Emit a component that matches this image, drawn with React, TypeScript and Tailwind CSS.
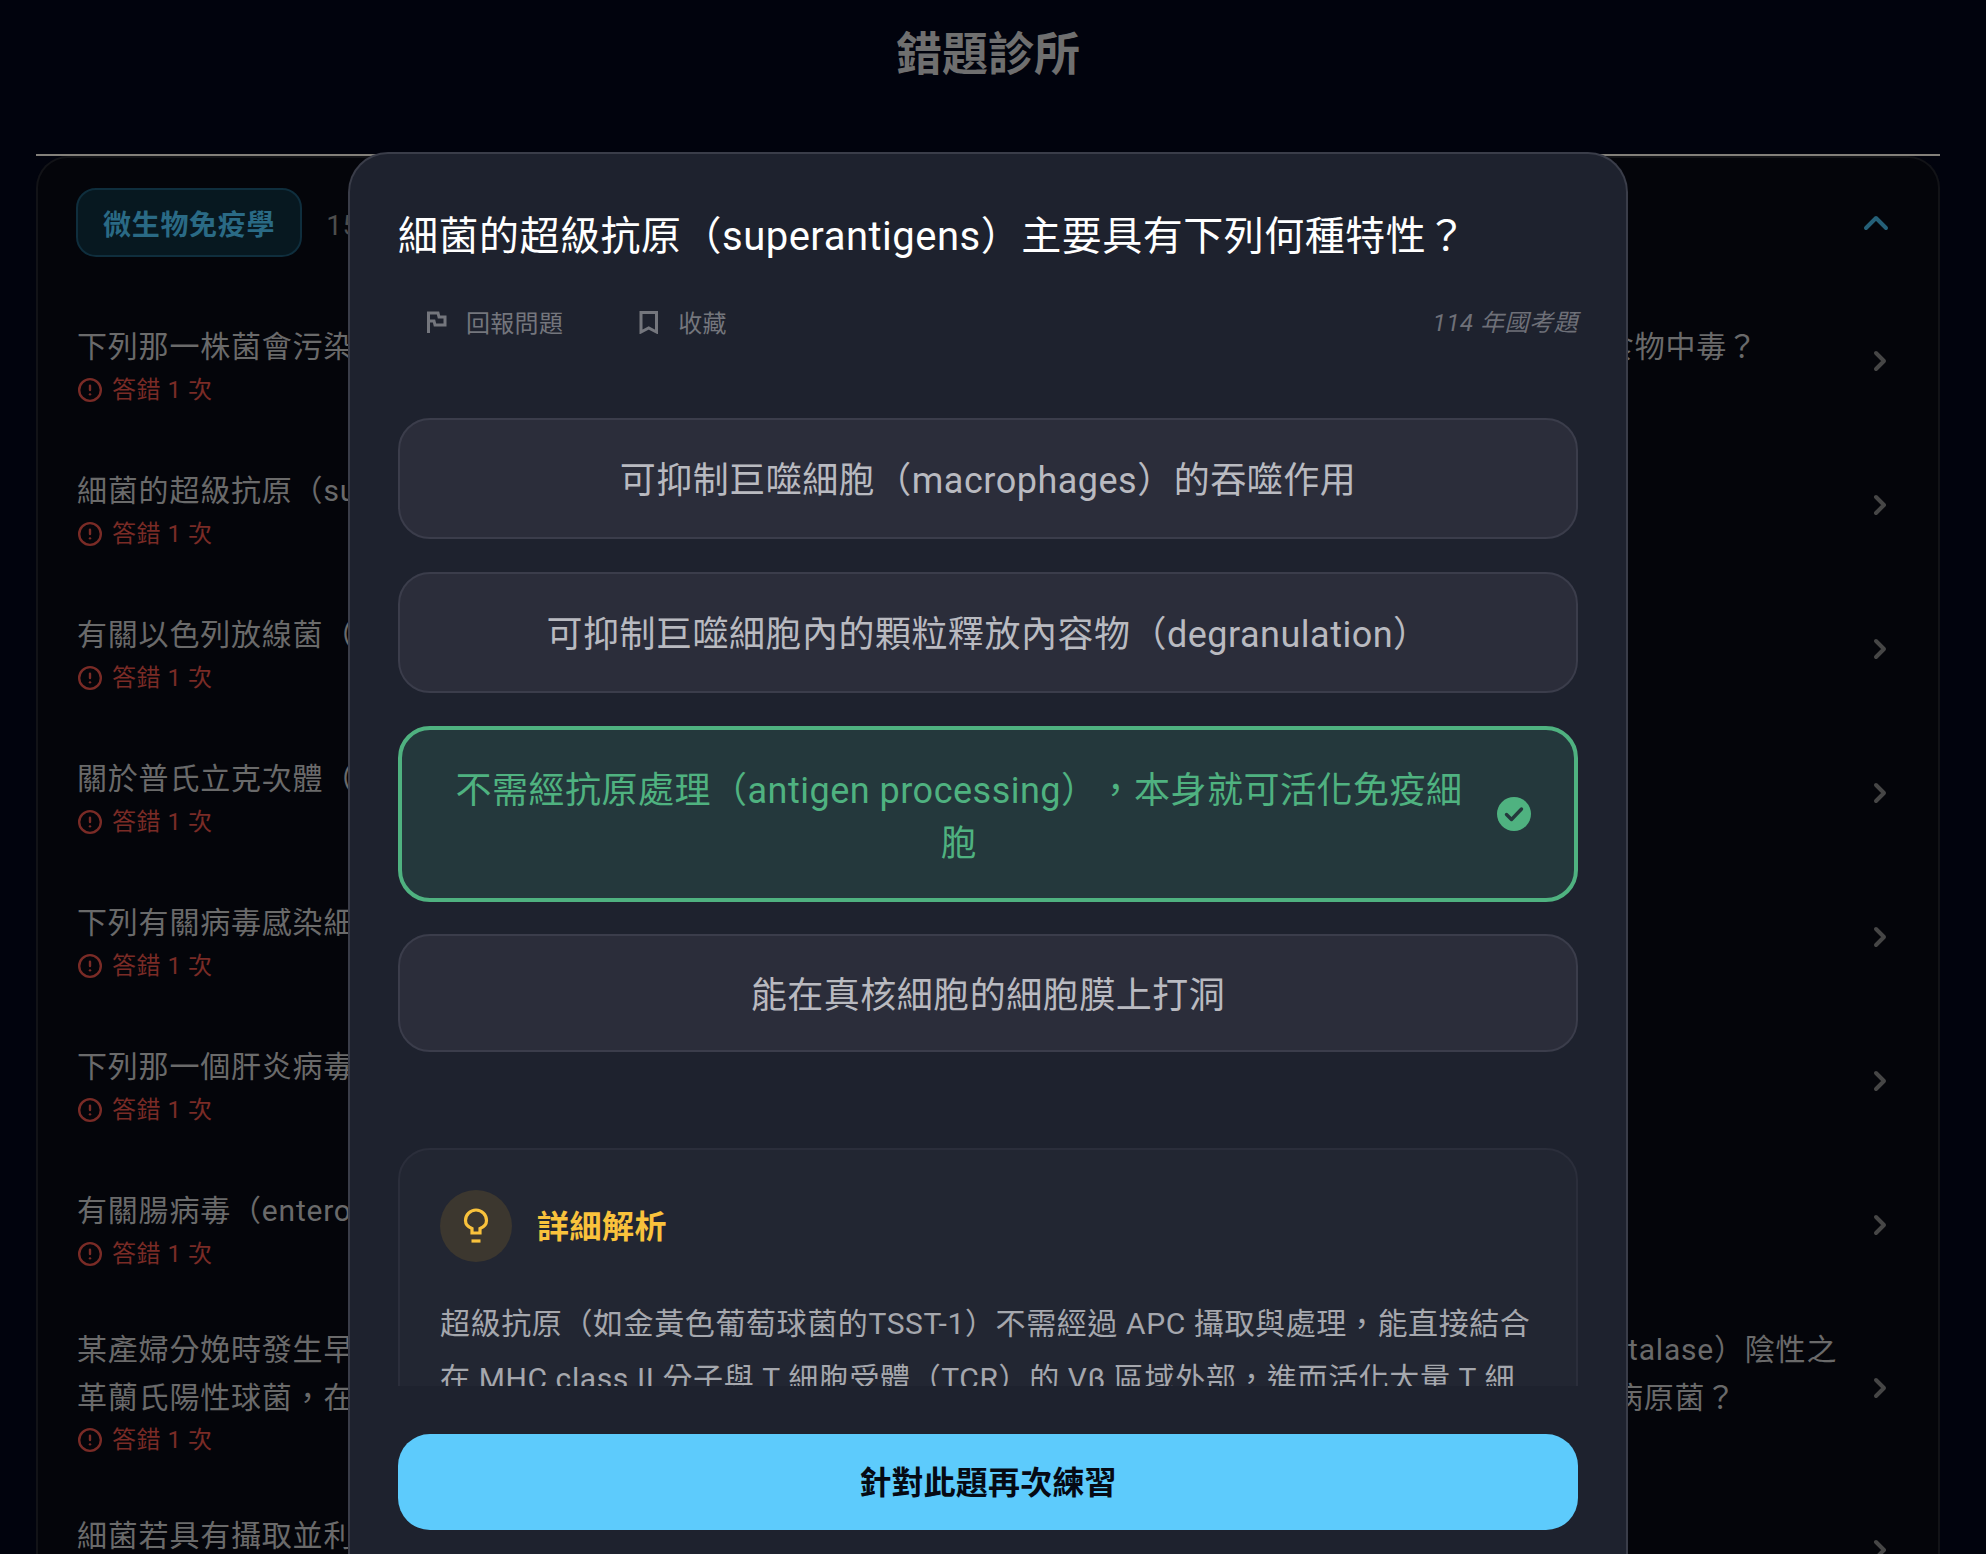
import { ChevronRight, ChevronUp, CircleAlert } from "lucide-react";
import React from "react";

const rows: { lines: string[] }[] = [
  { lines: ["下列那一株菌會污染米飯或其他澱粉類食品，並產生耐熱性嘔吐型腸毒素，經重新加熱後仍會造成嚴重嘔吐1型的食物中毒？"] },
  { lines: ["細菌的超級抗原（superantigens）主要具有下列何種特性？"] },
  { lines: ["有關以色列放線菌（Actinomyces israelii）之敘述，下列何者正確？"] },
  { lines: ["關於普氏立克次體（Rickettsia prowazekii）之敘述，下列何者正確？"] },
  { lines: ["下列有關病毒感染細胞後之敘述，何者正確？"] },
  { lines: ["下列那一個肝炎病毒屬於缺陷型病毒？"] },
  { lines: ["有關腸病毒（enterovirus）之敘述，下列何者錯誤？"] },
  {
    lines: [
      "某產婦分娩時發生早產，新生兒出現敗血症與腦膜炎症狀， 血液培養分離出一種顯微鏡下呈短鏈狀排列、觸酶（catalase）陰性之",
      "革蘭氏陽性球菌，在血液培養基上呈現 β型溶血，且可水解馬尿酸，常見於陰道帶菌，下列何者最可能為此感染之病原菌？",
    ],
  },
  { lines: ["細菌若具有攝取並利用外來 DNA 的能力，此現象稱為下列何者？"] },
];

function QuestionRow({ lines }: { lines: string[] }) {
  return (
    <div className={`flex items-center justify-between ${lines.length > 1 ? "h-[181px]" : "h-[144px]"}`}>
      <div className="mt-2 flex flex-col pl-px">
        {lines.map((line, i) => (
          <p key={line} className={`text-[30px] leading-[48px] tracking-[0.8px] text-[#6a6a6a] ${i === 0 ? "pt-px" : ""}`}>
            {line}
          </p>
        ))}
        <div className="flex h-[37px] items-center gap-[9px] text-[24px] text-[#7a2b26]">
          <CircleAlert size={26} strokeWidth={2.2} />
          <span>答錯 1 次</span>
        </div>
      </div>
      <ChevronRight size={32} strokeWidth={3} className="shrink-0 text-[#464646]" />
    </div>
  );
}

function Option({ children, className }: { children: React.ReactNode; className: string }) {
  return (
    <div className={`rounded-[32px] border-2 border-[#3b3d4b] bg-[#2b2d3a] px-12 text-center text-[36px] leading-[53px] text-[#b9bac0] ${className}`}>
      {children}
    </div>
  );
}

function Modal() {
  return (
    <div className="absolute left-[348px] top-[152px] flex h-[1402px] w-[1280px] flex-col rounded-t-[40px] border-2 border-b-0 border-[#3a3d49] bg-[#1e222e]">
      <div className="h-[1232px] overflow-hidden px-12 pt-[53px]">
        <h2 className="text-[40px] font-normal leading-[60px] text-white">
          細菌的超級抗原（superantigens）主要具有下列何種特性？
        </h2>
        <div className="mt-9 flex h-10 items-center justify-between text-[24px] tracking-[0.3px] text-[#74767d]">
          <div className="flex items-center pt-px">
            <button className="ml-[27px] flex items-center gap-[17px]">
              <svg width="24" height="24" viewBox="0 0 24 24" fill="none" stroke="currentColor" strokeWidth="3" className="-mt-1">
                <path d="M3.5 23V3H13L14 7H20V15H10L9 11H3.5" />
              </svg>
              回報問題
            </button>
            <button className="ml-[74px] flex items-center gap-[17px]">
              <svg width="24" height="24" viewBox="0 0 24 24" fill="none" stroke="currentColor" strokeWidth="3" className="-mt-1">
                <path d="M4 2.5H19.5V22L11.7 18L4 22Z" />
              </svg>
              收藏
            </button>
          </div>
          <span className="italic tracking-[0.5px] text-[#6e7078]">114 年國考題</span>
        </div>

        <div className="mt-[75px] flex flex-col gap-[33px]">
          <Option className="pb-[29px] pt-[35px]">可抑制巨噬細胞（macrophages）的吞噬作用</Option>
          <Option className="pb-[29px] pt-[35px]">可抑制巨噬細胞內的顆粒釋放內容物（degranulation）</Option>
          <div className="flex items-center rounded-[32px] border-4 border-[#4fb280] bg-[#24383c] pb-[27px] pl-[47px] pr-[43px] pt-[35px] text-[36px] leading-[53px] text-[#4fb280]">
            <span className="flex-1 text-center">不需經抗原處理（antigen processing），本身就可活化免疫細胞</span>
            <svg width="34" height="34" viewBox="0 0 34 34" className="-mt-2 ml-7 shrink-0">
              <circle cx="17" cy="17" r="17" fill="#4fb280" />
              <path d="M9.5 17.5L14.5 22.5L24.5 12" fill="none" stroke="#24383c" strokeWidth="3.4" strokeLinecap="round" strokeLinejoin="round" />
            </svg>
          </div>
          <Option className="-mt-px pb-[27px] pt-[34px]">能在真核細胞的細胞膜上打洞</Option>
        </div>

        <div className="mt-[96px] rounded-t-[32px] border-2 border-[#2b2e3b] bg-[#222632] px-10 pb-10 pt-10">
          <div className="flex items-center gap-[25px]">
            <div className="flex h-[72px] w-[72px] items-center justify-center rounded-full bg-[#3c372f]">
              <svg width="36" height="36" viewBox="0 0 36 36" fill="none" stroke="#f9c23c" strokeWidth="3.2">
                <path d="M14 25V20.5C10 19 7.5 16.5 7.5 12.5A10.5 10.5 0 0 1 28.5 12.5C28.5 16.5 26 19 22 20.5V25Z" />
                <path d="M13.5 33H22.5" />
              </svg>
            </div>
            <h3 className="pt-0.5 text-[32px] font-bold text-[#f9c23c]">詳細解析</h3>
          </div>
          <p className="mt-[34px] text-[30px] leading-[55px] tracking-[0.6px] text-[#a5a7ad]">
            超級抗原（如金黃色葡萄球菌的TSST-1）不需經過 APC 攝取與處理，能直接結合在 MHC class II 分子與 T 細胞受體（TCR）的 Vβ 區域外部，進而活化大量 T 細胞並釋放大量細胞激素。
          </p>
        </div>
      </div>
      <div className="px-12 pt-12">
        <button className="h-24 w-full rounded-[32px] bg-[#5dcbfc] pt-0.5 text-[32px] font-bold tracking-[0.2px] text-[#060a14]">
          針對此題再次練習
        </button>
      </div>
    </div>
  );
}

export default function App() {
  return (
    <div className="relative h-[1554px] overflow-hidden bg-[#01030d] pl-9 pr-[46px] font-[Roboto,'Noto_Sans_CJK_TC',sans-serif] tracking-[0.5px] [text-spacing-trim:space-all]">
      <header className="flex h-[156px] justify-center border-b-2 border-[#83807a] pt-[24px]">
        <h1 className="text-[46px] font-bold leading-[60px] tracking-normal text-[#6f6f6f]">錯題診所</h1>
      </header>
      <section className="rounded-t-[32px] border-2 border-b-0 border-[#121317] bg-[#04050a] pl-[38px] pr-[42px] pt-[30px]">
        <div className="mb-[32px] flex items-center justify-between">
          <div className="flex items-center gap-6">
            <span className="rounded-[20px] border-2 border-[#0f2e3d] bg-[#071820] px-[25px] pb-[9px] pt-[15px] text-[28px] font-bold leading-[41px] tracking-[0.7px] text-[#2a6a85]">
              微生物免疫學
            </span>
            <span className="pt-1.5 text-[28px] text-[#4d4d4d]">15 題</span>
          </div>
          <ChevronUp size={40} strokeWidth={2.4} className="text-[#256078]" />
        </div>
        {rows.map((row) => (
          <QuestionRow key={row.lines[0]} lines={row.lines} />
        ))}
      </section>
      <Modal />
    </div>
  );
}
